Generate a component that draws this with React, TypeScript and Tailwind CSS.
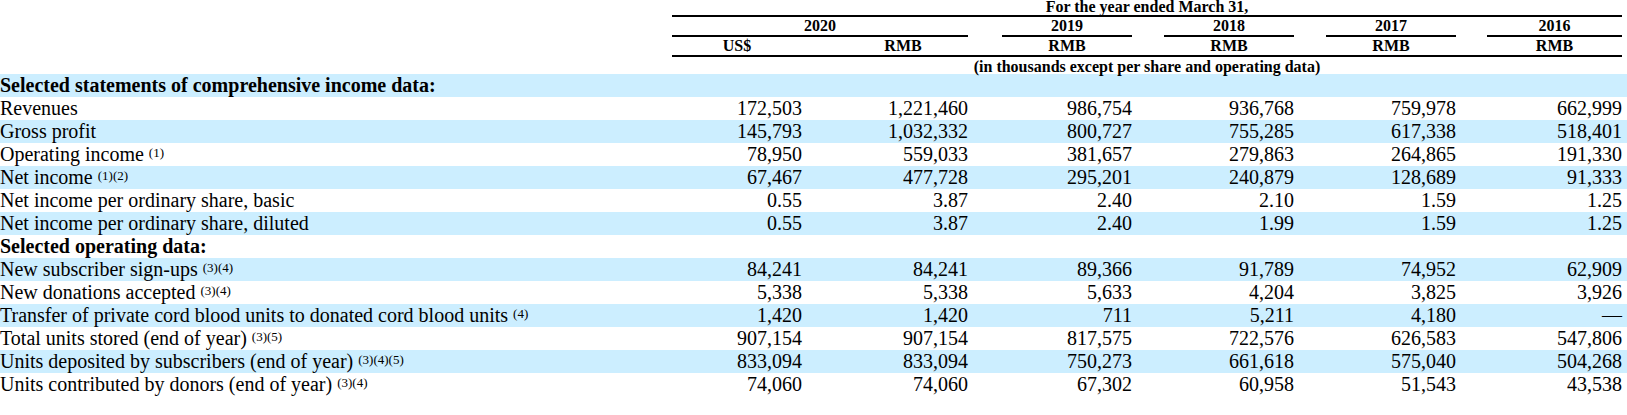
const DATA_COLS =
  'grid w-[950px] grid-cols-[130px_36px_130px_34px_130px_32px_130px_32px_130px_31px_135px]';

type BodyRow = {
  label: string;
  notes?: string;
  values?: string[];
  bold?: boolean;
};

const ROWS: BodyRow[] = [
  { label: 'Selected statements of comprehensive income data:', bold: true },
  { label: 'Revenues', values: ['172,503', '1,221,460', '986,754', '936,768', '759,978', '662,999'] },
  { label: 'Gross profit', values: ['145,793', '1,032,332', '800,727', '755,285', '617,338', '518,401'] },
  { label: 'Operating income', notes: '(1)', values: ['78,950', '559,033', '381,657', '279,863', '264,865', '191,330'] },
  { label: 'Net income', notes: '(1)(2)', values: ['67,467', '477,728', '295,201', '240,879', '128,689', '91,333'] },
  { label: 'Net income per ordinary share, basic', values: ['0.55', '3.87', '2.40', '2.10', '1.59', '1.25'] },
  { label: 'Net income per ordinary share, diluted', values: ['0.55', '3.87', '2.40', '1.99', '1.59', '1.25'] },
  { label: 'Selected operating data:', bold: true },
  { label: 'New subscriber sign-ups', notes: '(3)(4)', values: ['84,241', '84,241', '89,366', '91,789', '74,952', '62,909'] },
  { label: 'New donations accepted', notes: '(3)(4)', values: ['5,338', '5,338', '5,633', '4,204', '3,825', '3,926'] },
  {
    label: 'Transfer of private cord blood units to donated cord blood units',
    notes: '(4)',
    values: ['1,420', '1,420', '711', '5,211', '4,180', '\u2014'],
  },
  { label: 'Total units stored (end of year)', notes: '(3)(5)', values: ['907,154', '907,154', '817,575', '722,576', '626,583', '547,806'] },
  {
    label: 'Units deposited by subscribers (end of year)',
    notes: '(3)(4)(5)',
    values: ['833,094', '833,094', '750,273', '661,618', '575,040', '504,268'],
  },
  { label: 'Units contributed by donors (end of year)', notes: '(3)(4)', values: ['74,060', '74,060', '67,302', '60,958', '51,543', '43,538'] },
];

const SUB_HEADS = ['US$', 'RMB', 'RMB', 'RMB', 'RMB', 'RMB'];

function DataCells({ values, className = '' }: { values: string[]; className?: string }) {
  // numbers sit in the odd grid tracks, the even ones are spacers
  return (
    <>
      {values.map((v, i) => [
        i > 0 ? <div key={`gap-${i}`} /> : null,
        <div key={`v-${i}`} className={className}>
          {v}
        </div>,
      ])}
    </>
  );
}

function Row({ row, shaded }: { row: BodyRow; shaded: boolean }) {
  return (
    <div className={`flex h-[23px] leading-[23px] ${shaded ? 'bg-[#cceeff]' : ''}`}>
      <div className={`w-[672px] shrink-0 whitespace-nowrap ${row.bold ? 'font-bold' : ''}`}>
        {row.label}
        {row.notes && (
          <>
            {' '}
            <sup className="top-[-4px] text-[13px]">{row.notes}</sup>
          </>
        )}
      </div>
      {row.values && (
        <div className={DATA_COLS}>
          <DataCells values={row.values} className="text-right whitespace-nowrap" />
        </div>
      )}
    </div>
  );
}

export default function App() {
  return (
    <div className="h-[415px] w-[1627px] bg-white font-['Liberation_Serif','Times_New_Roman',serif] text-[20px] text-black">
      {/* Column headings */}
      <div className="text-[16px] font-bold">
        <div className="flex">
          <div className="w-[672px] shrink-0" />
          <div className="h-[17px] w-[950px] border-b-2 border-black text-center leading-[14px]">
            For the year ended March 31,
          </div>
        </div>
        <div className="flex">
          <div className="w-[672px] shrink-0" />
          <div className={`${DATA_COLS} h-[20px] leading-[18px]`}>
            <div className="col-span-3 border-b-2 border-black text-center">2020</div>
            <div />
            <div className="border-b-2 border-black text-center">2019</div>
            <div />
            <div className="border-b-2 border-black text-center">2018</div>
            <div />
            <div className="border-b-2 border-black text-center">2017</div>
            <div />
            <div className="border-b-2 border-black text-center">2016</div>
          </div>
        </div>
        <div className="flex">
          <div className="w-[672px] shrink-0" />
          <div className={`${DATA_COLS} h-[20px] border-b-2 border-black leading-[18px]`}>
            <DataCells values={SUB_HEADS} className="text-center" />
          </div>
        </div>
        <div className="flex">
          <div className="w-[672px] shrink-0" />
          <div className="h-[17px] w-[950px] pt-[1px] text-center leading-[17px]">
            (in thousands except per share and operating data)
          </div>
        </div>
      </div>

      {/* Body */}
      <div>
        {ROWS.map((row, i) => (
          <Row key={row.label} row={row} shaded={i % 2 === 0} />
        ))}
      </div>
    </div>
  );
}
